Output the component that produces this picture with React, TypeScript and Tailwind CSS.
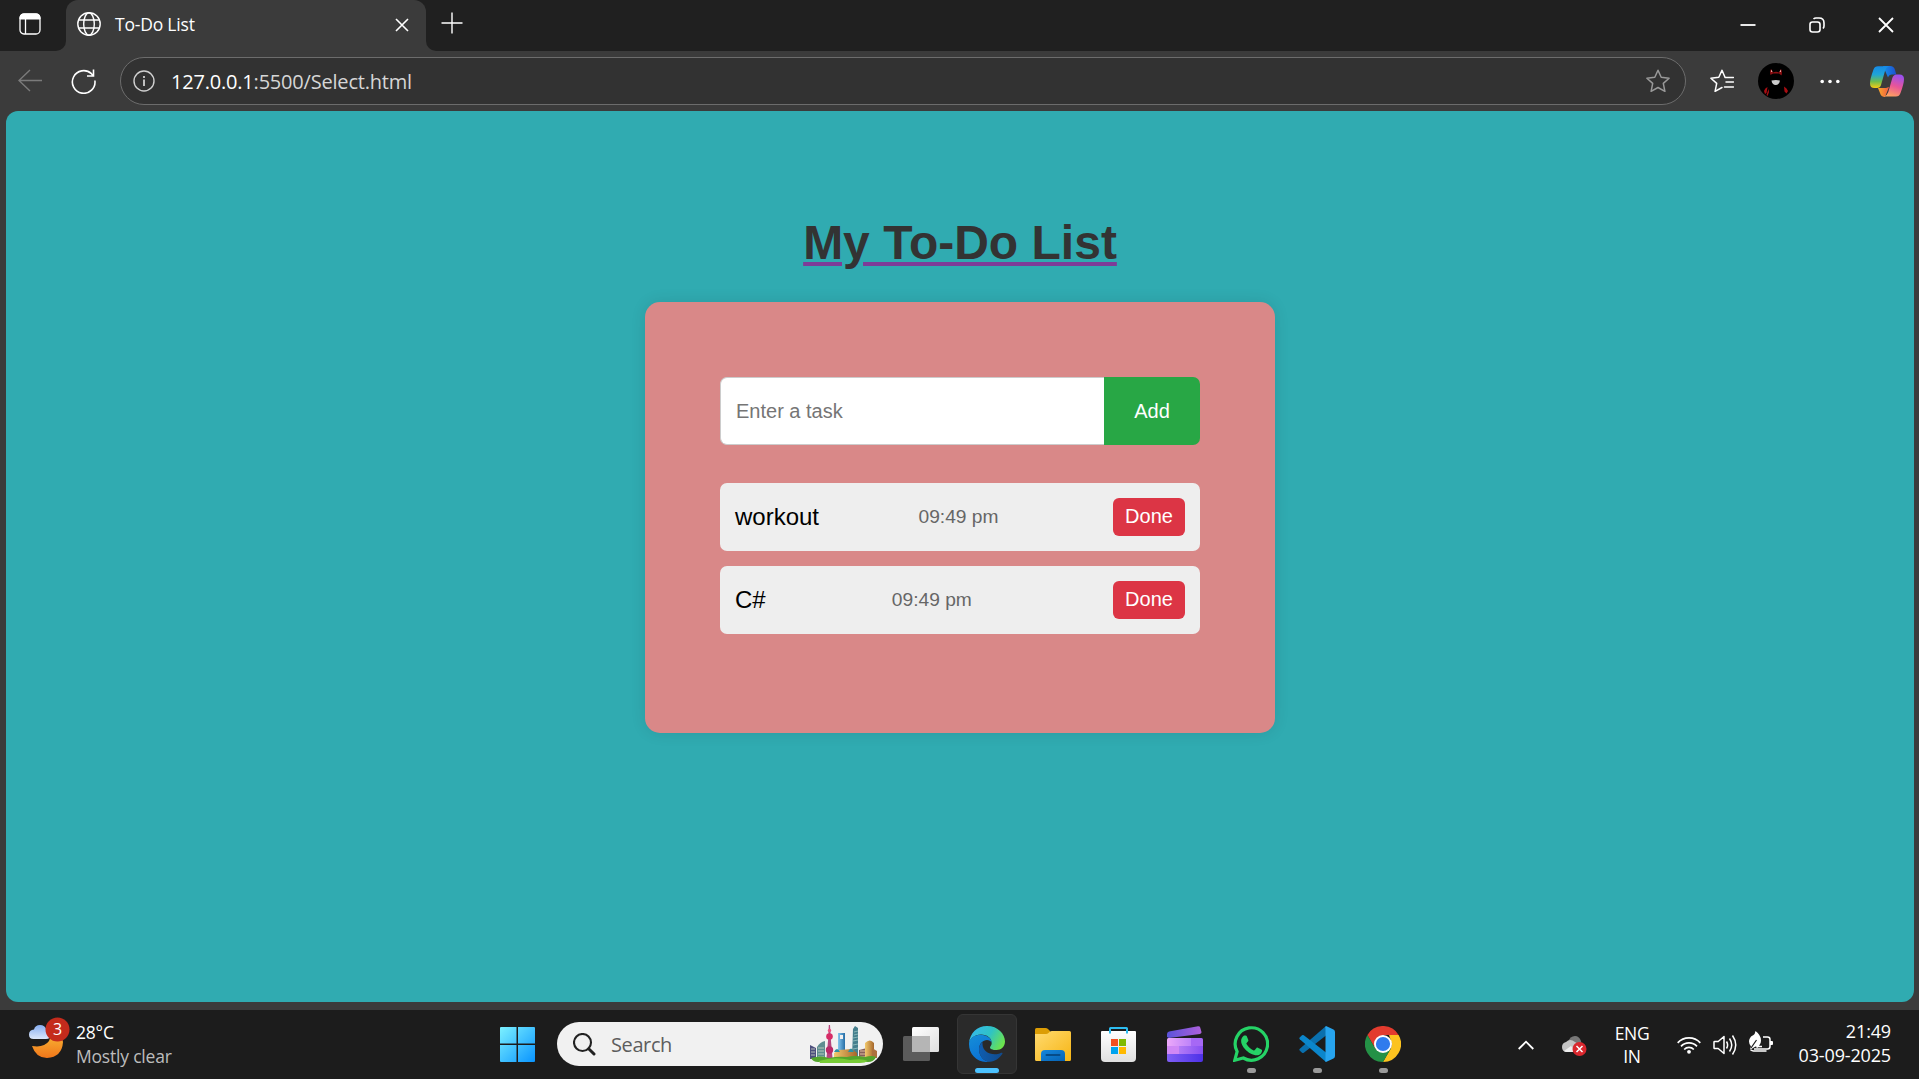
import React from 'react';

type Task = { name: string; time: string };

const tasks: Task[] = [
  { name: 'workout', time: '09:49 pm' },
  { name: 'C#', time: '09:49 pm' },
];

function WorkspaceIcon() {
  return (
    <svg className="size-[22px]" viewBox="0 0 22 22" fill="none">
      <rect x="1" y="1" width="20" height="20" rx="4" stroke="#fff" strokeWidth="1.3" />
      <path d="M1 6V4.5Q1 1 4.5 1h13Q21 1 21 4.500V6z" fill="#fff" stroke="#fff" />
      <path d="M6.500 6v15" stroke="#fff" strokeWidth="1.3" />
    </svg>
  );
}

function GlobeIcon() {
  return (
    <svg className="size-6" viewBox="0 0 24 24" fill="none" stroke="#fff" strokeWidth="1.4">
      <circle cx="12" cy="12" r="11.200" />
      <ellipse cx="12" cy="12" rx="5.300" ry="11.200" />
      <path d="M1.700 8h20.600M1.700 16h20.600" />
    </svg>
  );
}

const starPath =
  'M12 1.300l3.200 7 7.900.9-5.800 5.200 1.600 7.900L12 18.500l-6.900 3.800 1.600-7.900L.9 9.200l7.900-.9z';

function Avatar() {
  return (
    <svg className="size-9" viewBox="0 0 36 36">
      <circle cx="18" cy="18" r="18" fill="#000" />
      <path d="M12.500 12Q11.500 8 13 6L15 9.500Q18 8 21 9.500L23 6Q24.500 9 23.500 12.500L21 10.500H15z" fill="#8f0f12" />
      <path d="M13 9l.2-2.500 1.300 2.200zM23 9l-.2-2.500-1.300 2.200z" fill="#f3b5b0" />
      <path d="M11 15Q13 11 18 11t7 4l1 9-8 8-8-8z" fill="#000" />
      <path d="M13.500 17.500q4.500-1 8.500 0-.7 4.300-4.300 4.500-3.600-.2-4.200-4.500" fill="#ccc" />
      <path d="M6 28q1-3 3.500-4l-1 6-1.500 1zM26 23.500q3 1.500 4 4.500l-1.500 2.500-2-2zM8.500 32l2-6 .5 3-1.500 4z" fill="#a80d12" />
    </svg>
  );
}

function CopilotIcon() {
  return (
    <svg className="h-[31px] w-[34px]" viewBox="0 0 34 31">
      <defs>
        <linearGradient id="cpA" x1="0" y1="0" x2="0" y2="1">
          <stop stopColor="#168be8" />
          <stop offset=".38" stopColor="#1fa5d7" />
          <stop offset=".7" stopColor="#6fbd4f" />
          <stop offset="1" stopColor="#f6cc13" />
        </linearGradient>
        <linearGradient id="cpB" x1=".6" y1="0" x2=".3" y2="1">
          <stop stopColor="#9b50ee" />
          <stop offset=".5" stopColor="#e95598" />
          <stop offset="1" stopColor="#ffa45f" />
        </linearGradient>
        <linearGradient id="cpC">
          <stop stopColor="#1591ea" />
          <stop offset="1" stopColor="#1e50cf" />
        </linearGradient>
        <linearGradient id="cpD">
          <stop stopColor="#f7a92a" />
          <stop offset="1" stopColor="#f45b42" />
        </linearGradient>
      </defs>
      <path d="M13 0h7q4 0 5 4l1.300 4.500H22q-3 0-4 3z" fill="url(#cpC)" />
      <path d="M8 22h8l3-1-4 10Q11 31 10 27z" fill="url(#cpD)" />
      <path d="M8 .3h11.500Q16 1 15 5l-4 14q-.8 3-4 3H4.500Q0 22 0 17.500 0 13 3.500 3.500 4.700.3 8 .3z" fill="url(#cpA)" />
      <path d="M26.500 8.500h3Q34 8.500 34 13q0 4.500-3.500 14-1.200 3.500-4.500 3.500H14q3.200-1 4.300-4.500l4-14q1.200-3.500 4.200-3.500z" fill="url(#cpB)" />
    </svg>
  );
}

function BrowserChrome() {
  return (
    <header className="font-['Open_Sans',sans-serif] text-white">
      <div className="flex h-[51px] bg-[#3b3b3b]">
        <div className="flex w-[66px] items-start rounded-br-[10px] bg-[#202020] pl-[19px] pt-[13px]">
          <WorkspaceIcon />
        </div>
        <div className="w-[360px] bg-[#202020] bg-[linear-gradient(to_bottom,#202020_50%,#3b3b3b_50%)]">
          <div className="flex h-full items-center rounded-t-[12px] bg-[#3b3b3b] pb-[3px] pl-[11px] pr-[17px]">
            <GlobeIcon />
            <span className="ml-[14px] text-[17.5px] tracking-[-0.2px]">To-Do List</span>
            <svg className="ml-auto mt-[2px] size-[14px]" viewBox="0 0 14 14" stroke="#fff" strokeWidth="1.6">
              <path d="M1 1l12 12M13 1L1 13" />
            </svg>
          </div>
        </div>
        <div className="flex grow items-start rounded-bl-[10px] bg-[#202020] pl-[15px] pr-[25px]">
          <svg className="mt-[12px] size-[22px]" viewBox="0 0 22 22" stroke="#fff" strokeWidth="1.4">
            <path d="M11 .5v21M.5 11h21" />
          </svg>
          <svg className="ml-auto mt-[17px] size-4" viewBox="0 0 16 16" stroke="#fff" strokeWidth="1.8">
            <path d="M.5 8h15" />
          </svg>
          <svg className="ml-[53px] mt-[17px] size-4" viewBox="0 0 16 16" fill="none" stroke="#fff" strokeWidth="1.6">
            <rect x="1" y="5" width="10" height="10" rx="2.500" />
            <path d="M4.500 2Q5.500 1 7 1h3q5 0 5 5v3q0 1.500-1 2.500" />
          </svg>
          <svg className="ml-[53px] mt-[17px] size-4" viewBox="0 0 16 16" stroke="#fff" strokeWidth="1.8">
            <path d="M1 1l14 14M15 1L1 15" />
          </svg>
        </div>
      </div>
      <div className="flex h-[60px] items-center bg-[#3b3b3b] pl-[18px] pr-[15px]">
        <svg className="size-6" viewBox="0 0 24 24" fill="none" stroke="#7b7b7b" strokeWidth="1.400">
          <path d="M24 11.500H1M12 1L1 11.500 12 22" />
        </svg>
        <svg className="ml-[29px] size-[25px]" viewBox="0 0 25 25" fill="none" stroke="#fff" strokeWidth="1.6">
          <path d="M23.900 11.500a11.300 11.300 0 1 1-3.500-6.800L22.500 7M22.500.5V7H16" />
        </svg>
        <div className="ml-6 flex h-12 w-[1566px] items-center rounded-full border border-[#6c6c6c] bg-[#323232] pl-3 pr-[15px]">
          <svg className="size-[22px]" viewBox="0 0 22 22" fill="none" stroke="#d0d0d0" strokeWidth="1.400">
            <circle cx="11" cy="11" r="10" />
            <path d="M11 9.500V16" strokeWidth="1.800" />
            <path d="M11 6v2" strokeWidth="1.800" />
          </svg>
          <span className="ml-4 pt-px text-[20px] tracking-[-0.2px] text-[#d6d6d6]">
            <span className="text-white">127.0.0.1</span>:5500/Select.html
          </span>
          <svg className="ml-auto size-6" viewBox="0 0 24 24" fill="none" stroke="#999" strokeWidth="1.5" strokeLinejoin="round">
            <path d={starPath} />
          </svg>
        </div>
        <svg className="ml-6 size-6" viewBox="0 0 24 24" fill="none" stroke="#fff" strokeWidth="1.500" strokeLinejoin="round" strokeLinecap="round">
          <path d="M17 8.500l-2-.2-3-7-3.200 7-7.900.9 5.800 5.200-1.600 7.900 6.900-3.800M15 8.500h8.500M16 13h7.500M14.500 18h9" />
        </svg>
        <div className="ml-6">
          <Avatar />
        </div>
        <svg className="ml-[26px] h-[5px] w-5" viewBox="0 0 20 5" fill="#fff">
          <circle cx="2.200" cy="2.500" r="1.800" />
          <circle cx="10" cy="2.500" r="1.800" />
          <circle cx="17.800" cy="2.500" r="1.800" />
        </svg>
        <div className="ml-auto">
          <CopilotIcon />
        </div>
      </div>
    </header>
  );
}

function TodoPage() {
  return (
    <main className="ml-[6px] mr-[5px] flex h-[891px] flex-col items-center rounded-[12px] bg-[#30abb1] pt-[104px] font-['Liberation_Sans',Arial,sans-serif]">
      <h1 className="text-[48px] font-bold leading-[56px] text-[#333] underline decoration-[#7d3c98] decoration-[4px] underline-offset-[3px]">
        My To-Do List
      </h1>
      <section className="mt-[31px] h-[431px] w-[630px] rounded-[15px] bg-[#d98888] p-[75px] shadow-[0_0_15px_rgba(0,0,0,0.1)]">
        <div className="flex h-[68px]">
          <input
            className="h-full w-[384px] rounded-l-[7px] border border-r-0 border-[#ccc] bg-white pl-[15px] text-[20px] outline-none placeholder:text-[#757575]"
            placeholder="Enter a task"
          />
          <button className="w-24 rounded-r-[7px] bg-[#28a745] text-[20px] text-white">Add</button>
        </div>
        <ul className="mt-[38px] flex flex-col gap-[15px]">
          {tasks.map((task) => (
            <li key={task.name} className="flex h-[68px] items-center justify-between rounded-[7px] bg-[#eee] px-[15px]">
              <span className="text-[24px] text-black">{task.name}</span>
              <span className="mr-[15px] text-[19.200px] text-[#666]">{task.time}</span>
              <button className="h-[38px] w-[72px] rounded-[6px] bg-[#dc3545] pb-[2px] text-[20px] leading-[36px] text-white">
                Done
              </button>
            </li>
          ))}
        </ul>
      </section>
    </main>
  );
}

function WeatherIcon() {
  return (
    <svg className="h-[42px] w-[42px]" viewBox="0 0 42 42">
      <defs>
        <linearGradient id="moon" x1="0" y1="0" x2="0" y2="1">
          <stop stopColor="#fbc43b" />
          <stop offset="1" stopColor="#f0761a" />
        </linearGradient>
        <linearGradient id="cloud" x1="0" y1="0" x2="0" y2="1">
          <stop stopColor="#86aef0" />
          <stop offset="1" stopColor="#dce7fb" />
        </linearGradient>
      </defs>
      <path d="M24 12q10 4 11 14-1 15-16 16Q8 42 4 30q12 2 17-5 3-6 3-13z" fill="url(#moon)" />
      <path d="M5.500 23Q1 23 1 18.500t5-5Q7 9 12 9t6.500 5q4 0 4 4.500t-4.500 4.500z" fill="url(#cloud)" />
      <circle cx="29.500" cy="13.500" r="12" fill="#c42b1c" />
      <text x="29.500" y="19" textAnchor="middle" fill="#fff" className="font-['Open_Sans',sans-serif] text-[16px]">3</text>
    </svg>
  );
}

function Skyline() {
  return (
    <svg className="h-[38px] w-[68px]" viewBox="0 0 68 38">
      <defs>
        <linearGradient id="sky1" x1="0" x2="1">
          <stop stopColor="#84c6ef" />
          <stop offset="1" stopColor="#276ea6" />
        </linearGradient>
        <linearGradient id="gold" x1="0" x2="1">
          <stop stopColor="#f2c96d" />
          <stop offset="1" stopColor="#a5662a" />
        </linearGradient>
      </defs>
      <path d="M0 20l6 3v11H0z" fill="#4d4f7d" />
      <path d="M7 22q3-5 8-6v18H7z" fill="#5e8e91" />
      <path d="M1 24h4M1 27h4M1 30h4M8 23h6M8 26h6M8 29h6M8 32h6" stroke="#d1d9c5" strokeWidth=".8" />
      <path d="M28 8h7v25h-7z" fill="url(#sky1)" />
      <path d="M30 10h3v4h-3z" fill="#f1f1f1" />
      <path d="M43 4l2-3 3 2v31h-6z" fill="#467f8d" />
      <path d="M44 7l4-1M44 10l4-1M43 13l5-1M43 16l5-1M43 20l5-1M43 24l5-1" stroke="#a5cfca" strokeWidth=".7" />
      <path d="M18.800 0h1.200l1 16 1.500 17h-6l1.500-17z" fill="#b5467f" />
      <circle cx="19.500" cy="11.500" r="3.300" fill="#d72c67" />
      <circle cx="19.500" cy="25" r="3.700" fill="#b92a69" />
      <circle cx="19.500" cy="5.500" r="1.700" fill="#e95383" />
      <path d="M49 25l8-2v12h-8z" fill="#85605c" />
      <path d="M50 26h6M50 29h6M50 32h6" stroke="#e1bd9f" />
      <path d="M55 18q5-5 9 0v16h-9z" fill="url(#gold)" />
      <path d="M62 23l5 3v7h-5z" fill="#ad713e" />
      <path d="M24 28l5-3 13-1 5 4v6H24z" fill="url(#gold)" />
      <path d="M24 27q3-6 6 0zM38 27q3-7 6 0z" fill="#2c91a4" />
      <path d="M1 33q10-3 18 0 9-2 18-1 8-2 18 0 7-2 11 0-2 5-8 5H8q-5 0-7-4z" fill="#53a52c" />
      <path d="M9 36q15-5 31-1 12-2 18 1-3 2-8 2H10z" fill="#77cb35" />
    </svg>
  );
}

function WindowsIcon() {
  return (
    <svg className="size-[35px]" viewBox="0 0 35 35">
      <defs>
        <linearGradient id="win" x1="0" y1="0" x2="35" y2="35" gradientUnits="userSpaceOnUse">
          <stop stopColor="#7cf1ff" />
          <stop offset="1" stopColor="#0994ff" />
        </linearGradient>
      </defs>
      <path d="M1 0h15.500v16.500H0V1Q0 0 1 0zM18 0h16q1 0 1 1v15.500H18zM0 18h16.500v17H1q-1 0-1-1zM18 18h17v16q0 1-1 1H18z" fill="url(#win)" />
    </svg>
  );
}

function TaskViewIcon() {
  return (
    <svg className="size-9" viewBox="0 0 36 36">
      <defs>
        <linearGradient id="tv" x1="0" y1="0" x2="1" y2="1">
          <stop stopColor="#fff" />
          <stop offset="1" stopColor="#dedede" />
        </linearGradient>
      </defs>
      <rect x="9" y="1" width="27" height="25" rx="1.500" fill="url(#tv)" />
      <rect x="0" y="10" width="27" height="25" rx="1.500" fill="#5b5b5b" />
      <path d="M9 10h18v16H9z" fill="#b5b5b5" />
    </svg>
  );
}

function EdgeIcon() {
  return (
    <svg className="size-9" viewBox="0 0 36 36">
      <defs>
        <linearGradient id="edA" x1="0" y1=".2" x2="1" y2=".6">
          <stop stopColor="#35b8ef" />
          <stop offset=".55" stopColor="#2fc3c4" />
          <stop offset="1" stopColor="#6ce34d" />
        </linearGradient>
        <linearGradient id="edB" x1="0" y1="0" x2=".5" y2="1">
          <stop stopColor="#168fd8" />
          <stop offset="1" stopColor="#0a70d4" />
        </linearGradient>
        <linearGradient id="edC" x1="0" x2="1">
          <stop stopColor="#0f5db0" />
          <stop offset="1" stopColor="#114a8b" />
        </linearGradient>
      </defs>
      <path d="M0 17C1 7 8 0 18 0c11 0 18 8 18 15.500 0 5-4 8.500-8.500 8.500-4 0-6.500-1.300-6.500-2.600 0-.9 1.700-1.800 1.700-4.400C22.700 12 18 8.500 12 8.500 5 8.500 1 13 0 17z" fill="url(#edA)" />
      <path d="M0 18C0 13 5 8.800 11.500 8.800c6.500 0 11.200 3.700 11.200 8-1-2-2.700-2.900-4.700-2.900-4 0-8 3.700-8 9.100C10 30 15 36 21 35.800 9 37.500 0 29 0 18z" fill="url(#edB)" />
      <path d="M13.500 16Q10 19 10 23c0 7 5 13 11 12.800 5-.5 9.300-3.300 12.300-7.800.6-1-.2-1.600-1-1.200C23.500 31 13.500 26 13.500 18z" fill="url(#edC)" />
    </svg>
  );
}

function FolderIcon() {
  return (
    <svg className="size-9" viewBox="0 0 36 36">
      <defs>
        <linearGradient id="fold" x1="0" y1="0" x2="1" y2="1">
          <stop stopColor="#ffda70" />
          <stop offset="1" stopColor="#f7b514" />
        </linearGradient>
        <linearGradient id="foldB" x1="0" y1="0" x2="1" y2="1">
          <stop stopColor="#1687dc" />
          <stop offset="1" stopColor="#0663b5" />
        </linearGradient>
      </defs>
      <path d="M0 3.500Q0 2 1.500 2h9q1.500 0 2.500 1l2 2v5H0z" fill="#dc9d05" />
      <path d="M0 8h11q1.500 0 2.500-1l1-1q1-1 2.500-1h17.500Q36 5 36 6.500v27q0 1.500-1.500 1.500h-33Q0 35 0 33.500z" fill="url(#fold)" />
      <path d="M6 35v-7q0-4 4-4h16q4 0 4 4v7z" fill="url(#foldB)" />
      <path d="M11.500 29h13" stroke="#064b88" strokeWidth="2" strokeLinecap="round" />
    </svg>
  );
}

function StoreIcon() {
  return (
    <svg className="size-9" viewBox="0 0 36 36">
      <defs>
        <linearGradient id="bag" x1="0" y1="0" x2="0" y2="1">
          <stop stopColor="#fff" />
          <stop offset="1" stopColor="#dfdfdf" />
        </linearGradient>
      </defs>
      <path d="M0 5.500Q0 5 1 5h33q1 0 1 1v26q0 4-4 4H4q-4 0-4-4z" fill="url(#bag)" />
      <path d="M9 7.500V2.500Q9 2 9.500 2h16q.5 0 .5.500v5" fill="none" stroke="#2dbdf1" strokeWidth="2" />
      <path d="M10 13h7v7h-7z" fill="#f25022" />
      <path d="M18 13h7v7h-7z" fill="#7fba00" />
      <path d="M10 21h7v7h-7z" fill="#00a4ef" />
      <path d="M18 21h7v7h-7z" fill="#ffb900" />
    </svg>
  );
}

function ClipIcon() {
  return (
    <svg className="size-9" viewBox="0 0 36 36">
      <defs>
        <linearGradient id="clA">
          <stop stopColor="#5a52da" />
          <stop offset="1" stopColor="#ad60db" />
        </linearGradient>
        <linearGradient id="clB">
          <stop stopColor="#eda9f9" />
          <stop offset="1" stopColor="#bd83fa" />
        </linearGradient>
        <linearGradient id="clC">
          <stop stopColor="#b27bf6" />
          <stop offset="1" stopColor="#874ff2" />
        </linearGradient>
        <linearGradient id="clD">
          <stop stopColor="#805ff5" />
          <stop offset="1" stopColor="#4d31e8" />
        </linearGradient>
      </defs>
      <path d="M0 11V8q0-2 2-2.600L31 .2q1.800-.3 2.200 1.300L34.500 6q.2 1.700-1.500 2L2 12z" fill="url(#clA)" />
      <path d="M0 13.500Q0 12 1.500 12H24v8H0z" fill="url(#clB)" />
      <path d="M24 12h10.500q1.500 0 1.500 1.500V20H24z" fill="#a668f5" />
      <path d="M0 20h12v8H0z" fill="#d088f5" />
      <path d="M12 20h24v8H12z" fill="url(#clC)" />
      <path d="M0 28h36v6q0 2-2 2H2q-2 0-2-2z" fill="url(#clD)" />
    </svg>
  );
}

function WhatsAppIcon() {
  return (
    <svg className="size-9" viewBox="0 0 36 36" fill="none">
      <path d="M1.800 34.200l2.300-8.600A16.200 16.200 0 1 1 10.300 32z" stroke="#25d366" strokeWidth="3.200" />
      <path
        d="M11 9.500h1.700c.6 0 .9.400 1.100.8l1.500 3.600c.2.500.1.900-.2 1.300l-1.500 1.900c-.3.300-.3.600-.1 1 1.700 3 4 4.900 7.200 6.300.5.200.8.100 1.100-.3l1.700-2.100c.4-.5.8-.5 1.300-.3l3.600 1.700c.6.300.7.500.7.900 0 3-2.500 5-5 5-4.500 0-9-2.600-12-6-2.500-2.800-4-5.600-4-8.300 0-2.500 1.400-4.600 2.900-5.500z"
        fill="#25d366"
      />
    </svg>
  );
}

function CodeIcon() {
  return (
    <svg className="size-9" viewBox="0 0 36 36">
      <path d="M.7 24.400L3 26.700q.8.700 1.800 0L27 9.500V0L.8 22.800q-.9.800-.1 1.600z" fill="#0a70ae" />
      <path d="M.7 11.500L3 9.300q.8-.7 1.800 0L27 26.500V36L.8 13.200q-.9-.8-.1-1.700z" fill="#0b86cb" />
      <path d="M27 0l7.500 3.500Q36 4.200 36 6v24q0 1.800-1.500 2.500L27 36q-1.500-1-.5-2.500V2.500Q25.500 1 27 0z" fill="#27a4ee" />
    </svg>
  );
}

function ChromeIcon() {
  return (
    <svg className="size-9" viewBox="0 0 36 36">
      <path d="M2.400 9A18 18 0 0 1 33.600 9H18L10.200 22.500z" fill="#e33b2e" />
      <path d="M33.600 9A18 18 0 0 1 18 36l7.800-13.500L27 18l-3-9z" fill="#fcc31f" />
      <path d="M2.400 9A18 18 0 0 0 18 36l7.800-13.500L18 27l-7.800-4.500z" fill="#249146" />
      <circle cx="18" cy="18" r="9" fill="#fff" />
      <circle cx="18" cy="18" r="7.100" fill="#2f7bed" />
    </svg>
  );
}

function AppTile({ children, active, running }: { children: React.ReactNode; active?: boolean; running?: boolean }) {
  return (
    <div
      className={
        active
          ? 'flex h-[60px] w-[60px] flex-col items-center rounded-[6px] border border-[#353535] bg-[#2a2a2a] pt-[11px]'
          : 'flex h-[60px] w-[60px] flex-col items-center pt-[12px]'
      }
    >
      {children}
      {active && <span className="mt-[6px] h-[5px] w-6 shrink-0 rounded-full bg-[#4cc2ff]" />}
      {running && <span className="mt-[6px] h-[5px] w-[9px] rounded-full bg-[#9a9a9a]" />}
    </div>
  );
}

function Tray() {
  return (
    <div className="ml-auto mr-[28px] flex h-full shrink-0 items-center">
      <svg className="h-[10px] w-4" viewBox="0 0 16 10" fill="none" stroke="#fff" strokeWidth="1.800">
        <path d="M.7 9L8 1.700 15.300 9" />
      </svg>
      <svg className="ml-[28px] mt-[3px] h-5 w-[25px]" viewBox="0 0 25 20">
        <path d="M6 6Q8 0 13 0q4 0 6 5l1 7H9z" fill="#777" />
        <path d="M5 16Q0 16 0 11q0-4 4-5 4-4 9 0l5 3v7z" fill="#c4c4c4" />
        <path d="M2 15l7-5 5 6H5q-2 0-3-1z" fill="#eee" />
        <circle cx="17.500" cy="13" r="7" fill="#d9272e" />
        <path d="M14.500 10l6 6M20.500 10l-6 6" stroke="#fff" strokeWidth="1.500" />
      </svg>
      <div className="ml-[23px] w-[44px] text-center text-[17.5px] leading-[23px] tracking-[-0.3px]">
        <div>ENG</div>
        <div>IN</div>
      </div>
      <svg className="ml-[23px] h-[18px] w-6" viewBox="0 0 24 18" fill="none" stroke="#fff" strokeWidth="1.700">
        <path d="M.7 6.800a15.500 15.500 0 0 1 22.600 0M4 10.300a11 11 0 0 1 16 0M7.200 13.500a6.600 6.600 0 0 1 9.600 0" />
        <circle cx="12" cy="15.800" r="1.900" fill="#fff" stroke="none" />
      </svg>
      <svg className="ml-3 size-6" viewBox="0 0 24 24" fill="none" stroke="#fff" strokeWidth="1.500">
        <path d="M1.700 8.500h3.500L11 3.500v17l-5.800-5H1.700Q1 15.500 1 15V9q0-.5.700-.5z" strokeLinejoin="round" />
        <path d="M13.500 8.500q2.200 3.500 0 7M16.500 5.500q4.500 6.500 0 13M19.500 2.500q6.500 9.500 0 19" />
      </svg>
      <svg className="mb-[3px] ml-3 size-6" viewBox="0 0 24 24" fill="none">
        <path d="M14 6h4.500Q21 6 21 8.500v7q0 2.500-2.500 2.500H5M1.500 18.800q2 1.700 4 1.200h12" stroke="#fff" strokeWidth="1.500" />
        <path d="M21 10h2q1 0 1 1v2q0 1-1 1h-2z" fill="#fff" />
        <path d="M6.500 0Q12 4 12 9.500q0 4-4 6.500l-1.500-.5-5 3Q1 17.500 2 15.500-1 12 .5 8q1-3 4-4Q6 3 6.500 0z" fill="#fff" />
        <path d="M2 17l5.500-8" stroke="#1c1c1c" strokeWidth="1.200" />
        <path d="M10 14q-2 1-2 3M9 15.500h4" stroke="#fff" strokeWidth="1.300" />
      </svg>
      <div className="mb-[4px] ml-[16px] w-[102px] whitespace-nowrap text-right text-[18px] leading-6 tracking-[-0.15px]">
        <div>21:49</div>
        <div>03-09-2025</div>
      </div>
    </div>
  );
}

function Taskbar() {
  return (
    <footer className="flex h-[69px] items-start bg-[#1c1c1c] font-['Open_Sans',sans-serif] text-white">
      <div className="flex w-[500px] pl-[28px] pt-[6px]">
        <WeatherIcon />
        <div className="ml-[6px] pt-[4px] text-[17.5px] leading-6 tracking-[-0.2px]">
          <div>28°C</div>
          <div className="text-[#bdbdbd]">Mostly clear</div>
        </div>
      </div>
      <div className="mt-[17px]">
        <WindowsIcon />
      </div>
      <div className="ml-[22px] mt-[12px] flex h-11 w-[326px] items-center rounded-full bg-[#f1f1f1] pl-4 pr-[5px]">
        <svg className="size-[23px]" viewBox="0 0 23 23" fill="none" stroke="#222">
          <circle cx="9.500" cy="9.500" r="8.500" strokeWidth="2.100" />
          <path d="M15.700 15.700l5.300 5.300" strokeWidth="3" strokeLinecap="round" />
        </svg>
        <span className="ml-[15px] pt-[2px] text-[20px] tracking-[-0.4px] text-[#5d5d5d]">Search</span>
        <div className="ml-auto">
          <Skyline />
        </div>
      </div>
      <div className="ml-2 mt-1 flex gap-[6px]">
        <AppTile><TaskViewIcon /></AppTile>
        <AppTile active><EdgeIcon /></AppTile>
        <AppTile><FolderIcon /></AppTile>
        <AppTile><StoreIcon /></AppTile>
        <AppTile><ClipIcon /></AppTile>
        <AppTile running><WhatsAppIcon /></AppTile>
        <AppTile running><CodeIcon /></AppTile>
        <AppTile running><ChromeIcon /></AppTile>
      </div>
      <Tray />
    </footer>
  );
}

export default function App() {
  return (
    <div className="flex h-[1079px] w-[1919px] flex-col overflow-hidden bg-[#3b3b3b]">
      <BrowserChrome />
      <TodoPage />
      <div className="h-2" />
      <Taskbar />
    </div>
  );
}
